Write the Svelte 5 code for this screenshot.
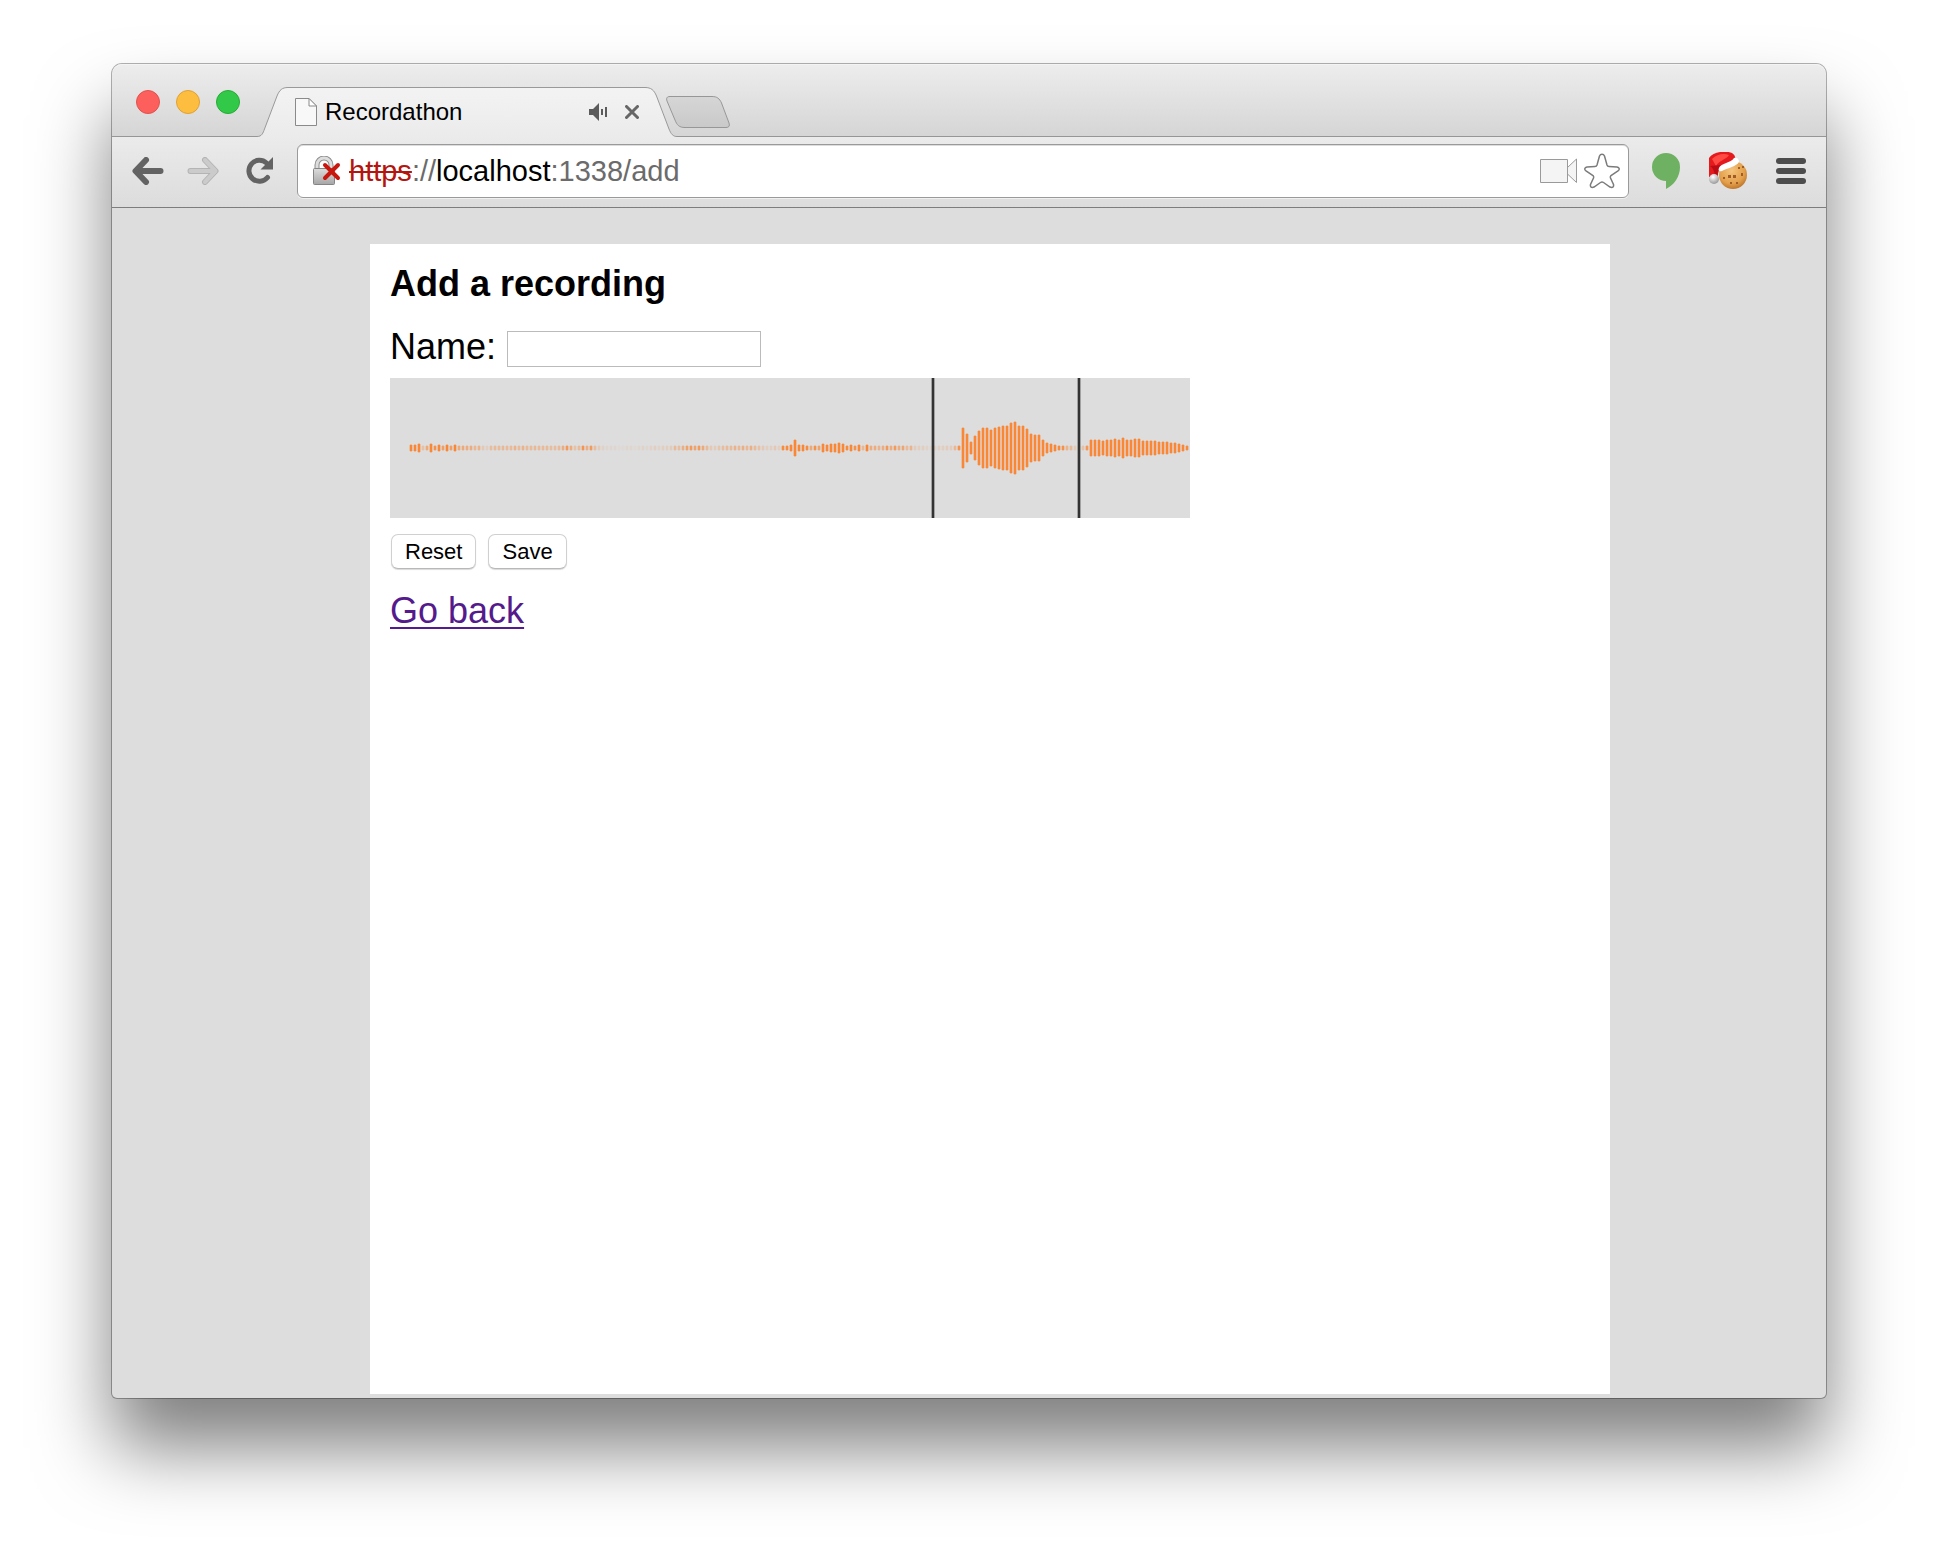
<script>
  // One value per bar; below 2.5 the bar keeps its height and fades instead.
  const peaks = [
    3, 2.6, 4, 0.8, 1.5, 4, 2.2, 2.6, 1.8, 2.7, 1.8, 2.6, 1.5, 1.5, 1.4, 1.4, 1.1, 1.2, 0.6, 0.4,
    0.9, 1, 1, 1.1, 1, 1, 1.2, 1, 1.2, 1, 1, 1.1, 1, 1, 1, 0.9, 0.9, 1, 1.4, 2,
    1.4, 0.8, 1, 2.1, 1.3, 1.9, 0.9, 0.5, 0.3, 0.2, 0.2, 0.2, 0.1, 0.1, 0.2, 0.2, 0.1, 0.2, 0.3, 0.2,
    0.3, 0.4, 0.3, 0.4, 0.4, 0.5, 1, 0.9, 1.3, 1.7, 1.9, 1.6, 1.9, 1.5, 1, 0.6, 0.5, 0.7, 0.9, 1,
    1, 1.2, 1.1, 1.3, 1.1, 1.3, 1, 0.8, 0.6, 0.4, 0.4, 0.6, 0.4, 2.4, 2.4, 3.4, 8, 3.4, 3.4, 2.4,
    1.5, 2.2, 1.7, 3.6, 3.4, 4.4, 4, 4.6, 4, 2.4, 3, 2.2, 3.4, 1.1, 3.4, 1.4, 1.4, 1.2, 1.4, 2,
    1.4, 1.9, 1.4, 1.6, 1, 1.2, 0.5, 0.4, 0.4, 0.3, 0.2, 0.3, 0.4, 0.4, 0.5, 0.5, 1.1, 2.2, 20, 14,
    6, 12, 17, 20, 20, 18, 20, 21, 22, 22, 25, 26, 22, 22, 19, 14, 13, 13, 8, 5,
    4, 3, 2.4, 2.2, 1.2, 1, 0.5, 0.2, 0.8, 2, 8, 8, 8, 7, 8, 8, 9, 8, 10, 8,
    8, 9, 9, 7, 7, 7, 7, 6, 6, 6, 5, 5, 4, 3, 2.4
  ];
  const bars = peaks.map((p, i) => ({
    x: 20 + i * 4,
    half: Math.max(2, Math.round(p)),
    alpha: Math.min(1, p / 2.5)
  }));
  const handles = [542, 688];

  let name = $state('');
</script>

<div class="window">
  <header class="tabstrip">
    <div class="lights">
      <button class="light red" aria-label="Close window"></button>
      <button class="light yellow" aria-label="Minimise window"></button>
      <button class="light green" aria-label="Zoom window"></button>
    </div>
    <div class="tab">
      <svg class="tab-shape" width="420" height="50" viewBox="0 0 420 50" aria-hidden="true">
        <defs>
          <linearGradient id="tabFill" x1="0" y1="0" x2="0" y2="1">
            <stop offset="0" stop-color="#f3f3f3" />
            <stop offset="1" stop-color="#ebebeb" />
          </linearGradient>
        </defs>
        <path d="M0 49.5C5 49.5 6 46 7.500 42L20 9C22.500 3 25 .5 31 .5H388C394 .5 397 3 399.500 9L412 42C414 47 416 49.500 420 49.500V50H0Z" fill="url(#tabFill)" />
        <path d="M0 49.5C5 49.5 6 46 7.500 42L20 9C22.500 3 25 .5 31 .5H388C394 .5 397 3 399.500 9L412 42C414 47 416 49.500 420 49.500" fill="none" stroke="#999" />
      </svg>
      <div class="tab-content">
        <svg width="22" height="28" viewBox="0 0 22 28" aria-hidden="true">
          <path d="M.5 .5H14L21.500 8V27.500H.5Z" fill="#f8f8f8" stroke="#8a8a8a" />
          <path d="M14 .5V8H21.500Z" fill="#fff" stroke="#8a8a8a" />
        </svg>
        <span class="title">Recordathon</span>
        <button class="icon speaker" aria-label="Mute tab">
          <svg width="18" height="18" viewBox="0 0 18 18" aria-hidden="true">
            <path d="M0 6H4L10 0V18L4 12H0Z" fill="#5b5b5b" />
            <path d="M13 6V12" stroke="#5b5b5b" stroke-width="2" />
            <path d="M17 4V14" stroke="#5b5b5b" stroke-width="2" />
          </svg>
        </button>
        <button class="icon" aria-label="Close tab">
          <svg width="14" height="14" viewBox="0 0 14 14" aria-hidden="true">
            <path d="M1.500 1.500L12.500 12.500M12.500 1.500L1.500 12.500" stroke="#666" stroke-width="3" stroke-linecap="round" />
          </svg>
        </button>
      </div>
    </div>
    <button class="icon newtab" aria-label="New tab">
      <svg width="64" height="32" viewBox="0 0 64 32" aria-hidden="true">
        <defs>
          <linearGradient id="newTabFill" x1="0" y1="0" x2="0" y2="1">
            <stop offset="0" stop-color="#d6d6d6" />
            <stop offset="1" stop-color="#c9c9c9" />
          </linearGradient>
        </defs>
        <path d="M4 .5H46C51 .5 53.500 2.500 55.500 7L63 27C64 30 63 31.500 60 31.500H19C13 31.500 11 29 9 24L1 5C0 2 1 .5 4 .5Z" fill="url(#newTabFill)" stroke="#979797" />
      </svg>
    </button>
  </header>

  <nav class="toolbar" aria-label="Browser toolbar">
    <button class="icon" aria-label="Back">
      <svg width="32" height="28" viewBox="0 0 32 28" aria-hidden="true">
        <path d="M14 3L3.500 14L14 25M4 14H28.500" fill="none" stroke="#636363" stroke-width="6" stroke-linecap="round" stroke-linejoin="round" />
      </svg>
    </button>
    <button class="icon" aria-label="Forward" disabled>
      <svg width="32" height="28" viewBox="0 0 32 28" aria-hidden="true">
        <path d="M18 3L28.500 14L18 25M28 14H3.500" fill="none" stroke="#b4b4b4" stroke-width="6" stroke-linecap="round" stroke-linejoin="round" />
        <path d="M18 3L28.500 14L18 25M28 14H3.500" fill="none" stroke="#cbcbcb" stroke-width="4" stroke-linecap="round" stroke-linejoin="round" />
      </svg>
    </button>
    <button class="icon reload" aria-label="Reload">
      <svg width="28" height="28" viewBox="0 0 28 28" aria-hidden="true">
        <path d="M21.500 20.500A10.500 10.500 0 1 1 20.500 6" fill="none" stroke="#636363" stroke-width="5" stroke-linecap="round" />
        <path d="M27 0V12.500H14.500Z" fill="#636363" />
      </svg>
    </button>

    <div class="omnibox">
      <svg width="28" height="30" viewBox="0 0 28 30" aria-hidden="true">
        <defs>
          <linearGradient id="lockFill" x1="0" y1="0" x2="0" y2="1">
            <stop offset="0" stop-color="#dcdcdc" />
            <stop offset="1" stop-color="#a6a6a6" />
          </linearGradient>
        </defs>
        <path d="M4 13V9A7 7 0 0 1 18 9V13" fill="none" stroke="#8c8c8c" stroke-width="5" />
        <path d="M4 13V9A7 7 0 0 1 18 9V13" fill="none" stroke="#ddd" stroke-width="3" />
        <rect x=".5" y="12.500" width="21" height="16" rx="1" fill="url(#lockFill)" stroke="#858585" />
        <path d="M12 9L25 22M25 9L12 22" stroke="#c8170f" stroke-width="4" stroke-linecap="round" />
      </svg>
      <div class="url" role="textbox" aria-label="Address" tabindex="0"><span class="scheme">https</span>://<span class="host">localhost</span>:1338/add</div>
      <button class="icon" aria-label="Camera access">
        <svg width="38" height="26" viewBox="0 0 38 26" aria-hidden="true">
          <path d="M.5 1.500H27.500V9.500L36.500 1V24.500L27.500 16V24.500H.5Z" fill="#f4f4f4" stroke="#9a9a9a" />
          <path d="M27.500 9V17" stroke="#9a9a9a" />
        </svg>
      </button>
      <button class="icon" aria-label="Bookmark this page">
        <svg width="36" height="36" viewBox="0 0 36 36" aria-hidden="true">
          <path d="M15.500 3C16.500 .5 19.500 .5 20.500 3L23 12Q23.500 13.500 25 13.500L33 14C35.500 14.500 36 16.500 34 18L27 22.500Q26 23.500 26.500 25L29.500 31.500C30 34 28.500 35 26 34L19.500 29.500Q18 28.500 16.500 29.500L10 34C7.500 35 6 34 6.500 31.500L9.500 25Q10 23.500 9 22.500L2 18C0 16.500 .5 14.500 3 14L11 13.500Q12.500 13.500 13 12Z" fill="#fff" stroke="#7b7b7b" stroke-width="1.500" />
        </svg>
      </button>
    </div>

    <div class="extensions">
      <button class="icon" aria-label="Hangouts">
        <svg width="28" height="38" viewBox="0 0 28 38" aria-hidden="true">
          <path d="M14 1A14 14 0 0 1 28 15C28 25 22 33 14 37V29A14 14 0 0 1 14 1Z" fill="#6fb162" />
        </svg>
      </button>
      <button class="icon" aria-label="Cookies">
        <svg width="38" height="38" viewBox="0 0 38 38" aria-hidden="true">
          <defs>
            <radialGradient id="cookieFill" cx=".45" cy=".35" r=".65">
              <stop offset="0" stop-color="#f5c47c" />
              <stop offset=".7" stop-color="#e3a04c" />
              <stop offset="1" stop-color="#c0782c" />
            </radialGradient>
            <radialGradient id="bobble" cx=".4" cy=".3" r=".7">
              <stop offset="0" stop-color="#fff" />
              <stop offset="1" stop-color="#999" />
            </radialGradient>
          </defs>
          <circle cx="24" cy="23" r="14" fill="url(#cookieFill)" />
          <g fill="#a05c22">
            <rect x="19" y="23" width="3" height="3" /><rect x="24" y="23" width="3" height="3" />
            <rect x="21" y="30" width="2" height="2" /><rect x="27" y="30" width="2" height="2" />
            <rect x="32" y="21" width="2" height="3" /><rect x="29" y="15" width="2" height="2" />
            <rect x="14" y="25" width="2" height="2" /><rect x="33" y="14" width="2" height="2" />
          </g>
          <path d="M0 25V6C4 0 16-2 23 1C26 3 27 6 26 9L11 15L8 25Z" fill="#e51a1c" />
          <path d="M3 7C8 2 15 1 20 3C17 8 10 8 7 14Z" fill="#ff4b43" />
          <path d="M1 14C4 16 6 20 6 25L9 24C8 20 9 16 12 13Z" fill="#b80d14" />
          <path d="M10 16C12 11 22 11 25 6C28 5 30 7 30 10C27 15 18 16 13 19C10 20 9 18 10 16Z" fill="#fff" />
          <circle cx="5" cy="27" r="5" fill="url(#bobble)" />
        </svg>
      </button>
      <button class="icon" aria-label="Menu">
        <svg width="30" height="28" viewBox="0 0 30 28" aria-hidden="true">
          <rect y="1" width="30" height="6" rx="3" fill="#4d4d4d" />
          <rect y="11" width="30" height="6" rx="3" fill="#4d4d4d" />
          <rect y="21" width="30" height="6" rx="3" fill="#4d4d4d" />
        </svg>
      </button>
    </div>
  </nav>

  <div class="page">
    <main>
      <h1>Add a recording</h1>
      <div class="field">
        <label for="name">Name:</label>
        <input id="name" type="text" bind:value={name} />
      </div>
      <svg class="waveform" viewBox="0 0 800 140" role="img" aria-label="Recording waveform" shape-rendering="crispEdges">
        <rect width="800" height="140" fill="#ddd" />
        {#each bars as bar}
          <g fill="#fa8737" opacity={bar.alpha}>
            <rect x={bar.x - 1} y={70 - bar.half} width="4" height={bar.half * 2} opacity="0.32" />
            <rect x={bar.x} y={70 - bar.half} width="2" height={bar.half * 2} />
            <rect x={bar.x} y={69 - bar.half} width="2" height={bar.half * 2 + 2} opacity="0.35" />
          </g>
        {/each}
        {#each handles as x}
          <rect x={x - 1} width="4" height="140" fill="#333" opacity="0.35" />
          <rect {x} width="2" height="140" fill="#333" />
        {/each}
      </svg>
      <div class="actions">
        <button class="push" type="reset">Reset</button>
        <button class="push" type="submit">Save</button>
      </div>
      <a href="#back">Go back</a>
    </main>
  </div>
</div>

<style>
  :global(body) {
    background: #fff;
    font-family: "Liberation Sans", Arial, Helvetica, sans-serif;
    color: #000;
  }
  :global(#app) {
    display: flex;
    box-sizing: border-box;
    min-height: 100vh;
    padding: 64px 112px 160px;
  }
  .window {
    flex: 1;
    min-width: 0;
    display: flex;
    flex-direction: column;
    border-radius: 10px 10px 5px 5px;
    background: #ddd;
    box-shadow: 0 0 0 1px rgba(0, 0, 0, 0.3), 0 50px 74px rgba(0, 0, 0, 0.5);
  }
  .icon {
    display: flex;
    flex: none;
    padding: 0;
    border: 0;
    background: none;
  }
  .tabstrip {
    display: flex;
    align-items: flex-end;
    height: 73px;
    padding-left: 24px;
    border-radius: 10px 10px 0 0;
    background: linear-gradient(#ededed, #d5d5d5);
    box-shadow: inset 0 1px #f4f4f4, inset 0 -1px #969696;
  }
  .lights {
    display: flex;
    gap: 16px;
    padding-right: 17px;
    margin-bottom: 23px;
  }
  .light {
    width: 24px;
    height: 24px;
    padding: 0;
    border: 1px solid;
    border-radius: 50%;
  }
  .red { background: #fd605c; border-color: #e2504c; }
  .yellow { background: #fdbe40; border-color: #e0a132; }
  .green { background: #33c948; border-color: #24ac35; }
  .tab {
    display: grid;
    flex: none;
  }
  .tab-shape, .tab-content {
    grid-area: 1 / 1;
  }
  .tab-content {
    display: flex;
    align-items: center;
    padding: 0 38px;
  }
  .title {
    flex: 1;
    margin-left: 8px;
    font-size: 24px;
    line-height: 28px;
  }
  .speaker { margin-right: 18px; }
  .newtab {
    margin: 0 0 9px -11px;
  }
  .toolbar {
    display: flex;
    align-items: center;
    gap: 23px;
    height: 68px;
    padding: 0 20px 2px;
    border-bottom: 1px solid #7d7d7d;
    background: linear-gradient(#ebebeb, #dcdcdc);
  }
  .reload { margin-left: 4px; }
  .extensions {
    display: flex;
    align-items: center;
    gap: 29px;
  }
  .omnibox {
    flex: 1;
    min-width: 0;
    display: flex;
    align-items: center;
    gap: 6px;
    box-sizing: border-box;
    height: 54px;
    padding: 0 8px 0 15px;
    border: 1px solid #9a9a9a;
    border-radius: 6px;
    background: #fff;
    box-shadow: inset 0 1px #ddd, 0 1px #f0f0f0;
  }
  .url {
    flex: 1;
    overflow: hidden;
    margin-left: 2px;
    font-size: 29px;
    line-height: 36px;
    white-space: nowrap;
    color: #6b6b6b;
  }
  .scheme {
    color: #b3150f;
    text-decoration: line-through;
  }
  .host { color: #000; }
  .page {
    flex: 1;
    display: flex;
    justify-content: center;
    padding: 36px 0 4px 42px;
  }
  main {
    box-sizing: border-box;
    width: 1240px;
    padding: 20px;
    background: #fff;
    font-size: 36px;
    line-height: 40px;
  }
  h1 {
    margin: 0 0 22px;
    font-size: 36px;
    line-height: 40px;
  }
  .field {
    display: flex;
    align-items: center;
    gap: 11px;
    margin-bottom: 11px;
  }
  .field input {
    box-sizing: border-box;
    width: 254px;
    height: 36px;
    margin-top: 5px;
    padding: 2px 4px;
    border: 1px solid #bbb;
    background: #fff;
    font: inherit;
    font-size: 22px;
  }
  .waveform {
    display: block;
    width: 100%;
    max-width: 800px;
  }
  .actions {
    display: flex;
    gap: 12px;
    padding: 16px 1px 22px;
  }
  .push {
    height: 35px;
    padding: 1px 13px 0;
    border: 1px solid #d0d0d0;
    border-bottom-color: #b8b8b8;
    border-radius: 7px;
    background: #fff;
    box-shadow: 0 1px 1px rgba(0, 0, 0, 0.15);
    font-family: inherit;
    font-size: 22px;
    color: #000;
  }
  a {
    color: #551a8b;
    text-decoration-thickness: 2px;
    text-underline-offset: 4px;
  }
</style>
